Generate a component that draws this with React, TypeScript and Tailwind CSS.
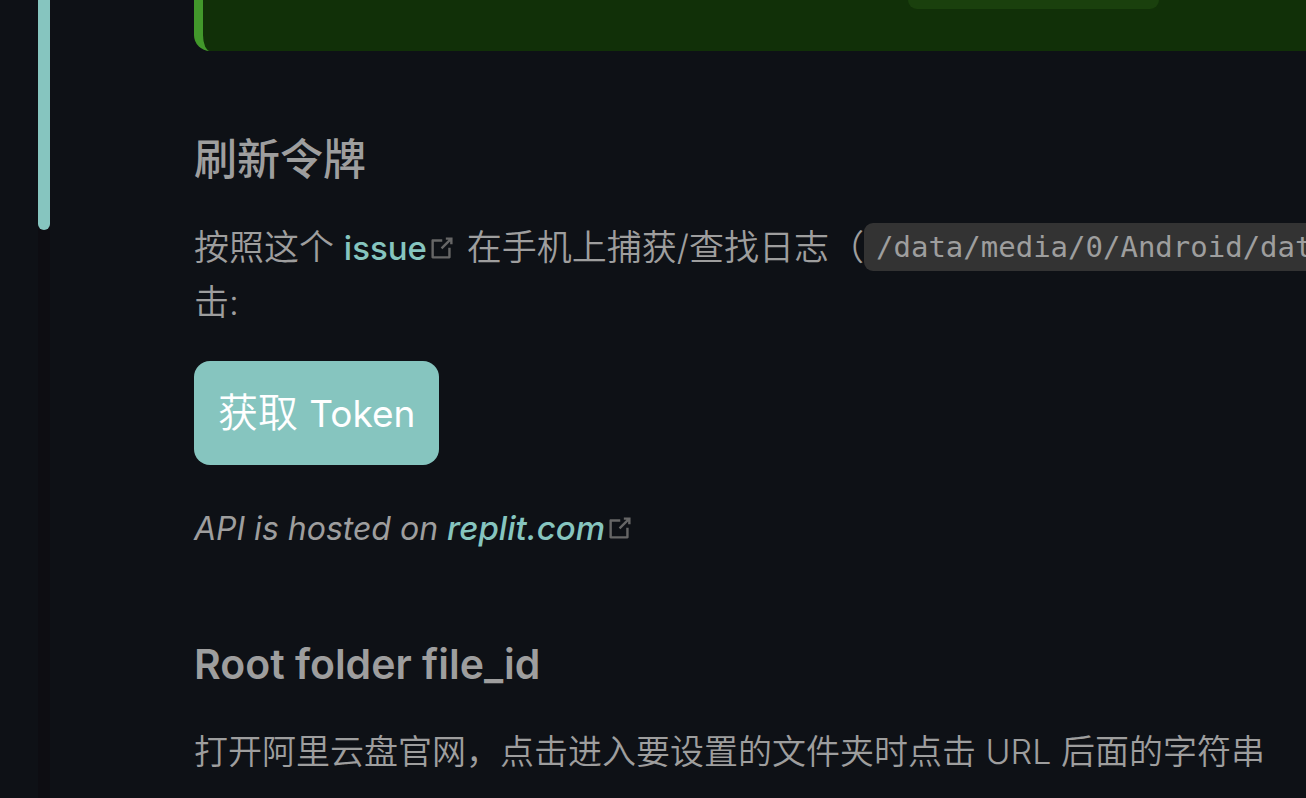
import type { ReactNode } from 'react'

function ExternalIcon() {
  return (
    <svg viewBox="0 0 100 100" aria-hidden="true" className="-my-2 inline-block h-[30px] w-[30px] align-[5px] text-[#666666]">
      <path
        fill="currentColor"
        d="M18.8,85.1h56l0,0c2.2,0,4-1.8,4-4v-32h-8v28h-48v-48h28v-8h-32l0,0c-2.2,0-4,1.8-4,4v56C14.8,83.3,16.6,85.1,18.8,85.1z"
      />
      <polygon
        fill="currentColor"
        points="45.7,48.7 51.3,54.3 77.2,28.5 77.2,37.2 85.2,37.2 85.2,14.9 62.8,14.9 62.8,22.9 71.5,22.9"
      />
    </svg>
  )
}

function ExternalLink({ href, children }: { href: string; children: ReactNode }) {
  return (
    <a href={href} target="_blank" rel="noreferrer" className="text-[33px] font-medium text-[#86c5bf] hover:underline">
      {children}
      <ExternalIcon />
    </a>
  )
}

export default function App() {
  return (
    <div className="flex min-h-screen overflow-hidden bg-[#0e1116] font-['Inter','Noto_Sans_CJK_SC',sans-serif] text-[34px] leading-[54px] text-[#9e9e9e]">
      {/* Sidebar edge with its scrollbar */}
      <aside className="flex w-[50px] shrink-0 justify-end">
        <div className="w-3 bg-[#0d0d12]">
          <div className="h-[230px] rounded-b-full bg-[#86c5bf]" />
        </div>
      </aside>

      <main className="min-w-0 flex-1 pl-36">
        {/* Tip block */}
        <div className="flex h-[51px] rounded-bl-2xl border-l-[9px] border-[#42982b] bg-[#113008]">
          <div className="ml-[705px] h-[9px] w-[251px] rounded-b-[9px] bg-[#1a400d]" />
        </div>

        <h3 className="mt-20 text-[43px] leading-[56px] font-medium">刷新令牌</h3>

        <p className="mt-[33px] text-[35px] leading-[54px] font-[350] whitespace-nowrap">
          按照这个 <ExternalLink href="#issue">issue</ExternalLink> 在手机上捕获/查找日志（
          <code className="rounded-[9px] bg-[#333333] px-3 py-[7px] align-[3px] font-['DejaVu_Sans_Mono',monospace] text-[29px] leading-none font-normal">
            /data/media/0/Android/dat
          </code>
          <br />
          击:
        </p>

        <button type="button" className="mt-8 block h-[104px] rounded-2xl bg-[#86c5bf] px-6 text-[40px] text-white">
          <span className="font-[350]">获取</span> <span className="text-[37px]">Token</span>
        </button>

        <p className="mt-9 text-[32px] italic">
          API is hosted on <ExternalLink href="https://replit.com">replit.com</ExternalLink>
        </p>

        <h3 className="mt-20 text-[41px] leading-[56px] font-semibold">Root folder file_id</h3>

        <p className="mt-[33px] font-[350] whitespace-nowrap">打开阿里云盘官网，点击进入要设置的文件夹时点击 URL 后面的字符串</p>
      </main>
    </div>
  )
}
